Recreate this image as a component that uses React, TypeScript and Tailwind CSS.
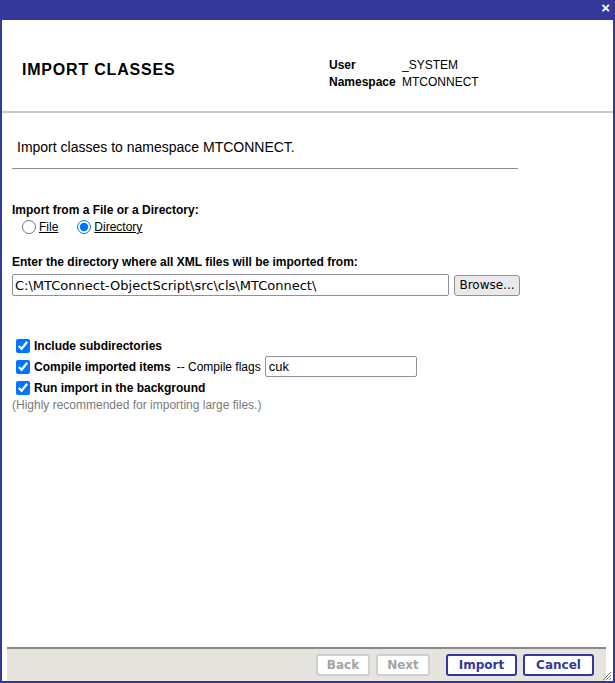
import React from "react";

const ARIAL = "font-['Liberation_Sans',Arial,sans-serif]";
const TAHOMA = "font-['DejaVu_Sans',Tahoma,sans-serif]";

function Check({ label }: { label: string }) {
  return (
    <label className="flex items-center h-[21px] pl-[4px]">
      <input
        type="checkbox"
        defaultChecked
        className="m-0 w-[14px] h-[14px] accent-[#0075ff]"
      />
      <span className="ml-[4px] text-[12px] font-bold text-black">{label}</span>
    </label>
  );
}

export default function App() {
  return (
    <div className={`w-[615px] h-[683px] bg-[#35379a] flex flex-col px-[2px] pb-[2px] ${ARIAL}`}>
      {/* title bar */}
      <div className="h-[20px] flex justify-end items-start pr-[3px]">
        <span className="text-white font-bold text-[15px] leading-[16px]">×</span>
      </div>

      <div className="flex-1 bg-white flex flex-col">
        {/* header */}
        <div className="h-[93px] flex items-center border-b-2 border-[#c8c8c8]">
          <h1 className="ml-[20px] mt-[8px] w-[307px] text-[16px] font-bold tracking-[0.8px] text-black">
            IMPORT CLASSES
          </h1>
          <div className="mt-[17px] text-[12px] leading-[17px] text-black">
            <div className="flex">
              <span className="w-[73px] font-bold">User</span>
              <span>_SYSTEM</span>
            </div>
            <div className="flex">
              <span className="w-[73px] font-bold">Namespace</span>
              <span>MTCONNECT</span>
            </div>
          </div>
        </div>

        {/* body */}
        <div className="flex-1 pl-[10px]">
          <p className="mt-[26px] ml-[5px] text-[14px] leading-[16px] text-black">
            Import classes to namespace MTCONNECT.
          </p>
          <div className="mt-[13px] w-[506px] h-px bg-[#8c8c8c]" />

          <div className="mt-[34px] text-[12px] font-bold leading-[14px] text-black">
            Import from a File or a Directory:
          </div>
          <div className="flex items-center h-[20px] ml-[10px] text-[12px] text-black">
            <label className="flex items-center">
              <input type="radio" name="src" className="m-0 w-[14px] h-[14px] accent-[#0075ff]" />
              <span className="ml-[3px] underline">File</span>
            </label>
            <label className="flex items-center ml-[19px]">
              <input type="radio" name="src" defaultChecked className="m-0 w-[14px] h-[14px] accent-[#0075ff]" />
              <span className="ml-[3px] underline">Directory</span>
            </label>
          </div>

          <div className="mt-[18px] text-[12px] font-bold leading-[14px] text-black">
            Enter the directory where all XML files will be imported from:
          </div>
          <div className="mt-[5px] flex items-center">
            <input
              defaultValue="C:\MTConnect-ObjectScript\src\cls\MTConnect\"
              className={`w-[437px] h-[22px] border border-[#8f8f9d] rounded-[2px] px-[2px] text-[13px] text-black outline-none ${TAHOMA}`}
            />
            <button
              className={`ml-[5px] w-[66px] h-[21px] border border-[#8f8f9d] rounded-[3px] bg-[#e9e9ed] text-[12px] text-black ${TAHOMA}`}
            >
              Browse...
            </button>
          </div>

          <div className="mt-[39px] flex flex-col">
            <Check label="Include subdirectories" />
            <label className="flex items-center h-[21px] pl-[4px]">
              <input type="checkbox" defaultChecked className="m-0 w-[14px] h-[14px] accent-[#0075ff]" />
              <span className="ml-[4px] text-[12px] font-bold text-black">Compile imported items</span>
              <span className="ml-[6px] text-[12px] text-black">-- Compile flags</span>
              <input
                defaultValue="cuk"
                className="ml-[4px] w-[152px] h-[21px] border border-[#8f8f9d] rounded-[2px] px-[3px] text-[13px] text-black outline-none"
              />
            </label>
            <Check label="Run import in the background" />
          </div>
          <div className="text-[12px] leading-[14px] text-[#7a7a7a]">
            (Highly recommended for importing large files.)
          </div>
        </div>

        {/* footer */}
        <div className="mx-[5px] mr-[7px] h-[34px] border-t-2 border-[#8a8a8a] bg-[#e6e4df] flex items-start justify-end pt-[5px] pr-[12px] gap-[6px] relative">
          <button disabled className={`w-[54px] h-[22px] rounded-[3px] border-2 border-[#cfcfcf] bg-white text-[12px] font-bold text-[#a3a3a3] ${TAHOMA}`}>
            Back
          </button>
          <button disabled className={`w-[54px] h-[22px] rounded-[3px] border-2 border-[#cfcfcf] bg-white text-[12px] font-bold text-[#a3a3a3] ${TAHOMA}`}>
            Next
          </button>
          <button className={`ml-[10px] w-[71px] h-[22px] rounded-[3px] border-2 border-[#35379a] bg-white text-[12px] font-bold text-[#35379a] ${TAHOMA}`}>
            Import
          </button>
          <button className={`w-[71px] h-[22px] rounded-[3px] border-2 border-[#35379a] bg-white text-[12px] font-bold text-[#35379a] ${TAHOMA}`}>
            Cancel
          </button>
          <svg className="absolute right-[-6px] bottom-0" width="11" height="11" viewBox="0 0 11 11">
            <path d="M10 2 L2 10 M10 5 L5 10 M10 8 L8 10" stroke="#777" strokeWidth="1" />
          </svg>
        </div>
      </div>
    </div>
  );
}
